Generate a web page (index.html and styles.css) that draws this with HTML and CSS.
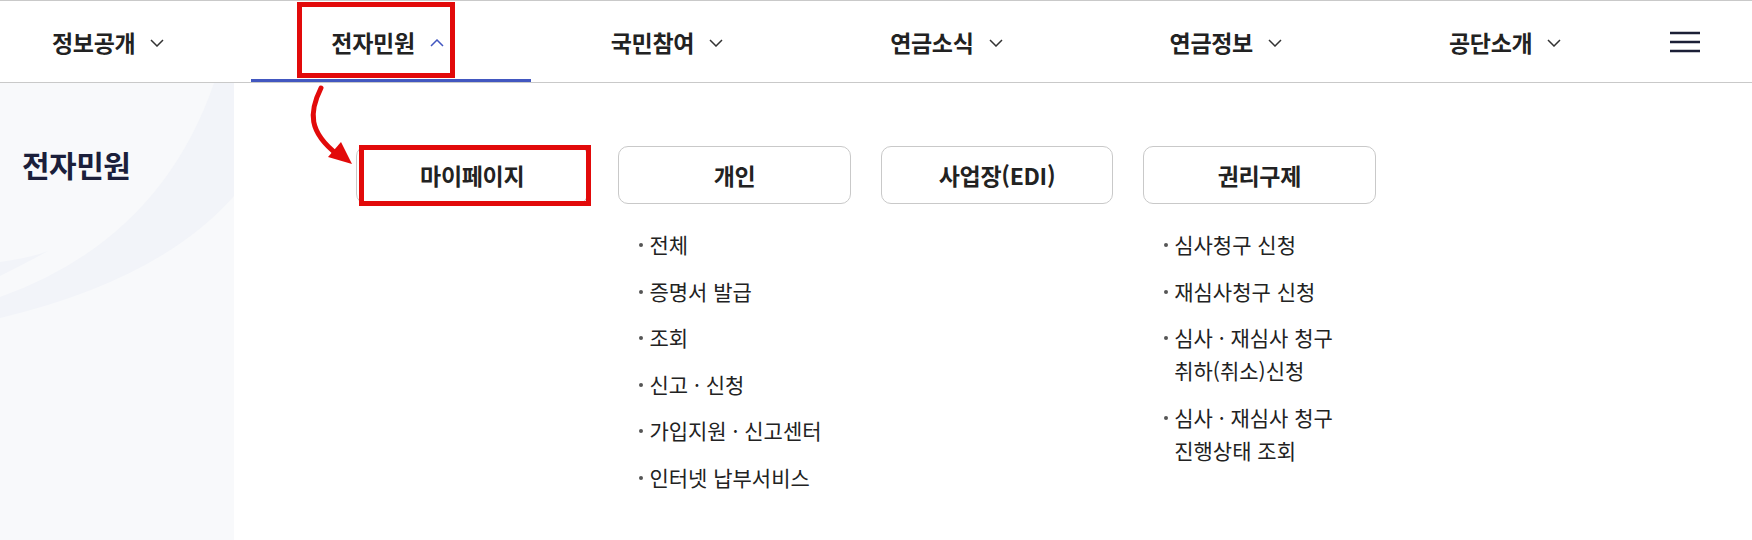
FILE: index.html
```html
<!doctype html>
<html lang="ko">
    <head>
        <meta charset="UTF-8">
        <meta name="viewport" content="width=device-width, initial-scale=1.0">
        <title>전자민원 | 메뉴</title>

        <link rel="stylesheet" href="styles.css">
    </head>
    <body>
        <header class="header">
            <nav class="gnb">
                <a class="gnb__item" href="#">
                    <span>정보공개</span>
                    <svg class="gnb__arrow" width="14" height="8" viewBox="0 0 14 8"><path d="M1 1l6 6 6-6"/></svg>
                </a>
                <a class="gnb__item gnb__item--active" href="#">
                    <span>전자민원</span>
                    <svg class="gnb__arrow" width="14" height="8" viewBox="0 0 14 8"><path d="M1 7l6-6 6 6"/></svg>
                    <span class="mark mark--gnb"></span>
                </a>
                <a class="gnb__item" href="#">
                    <span>국민참여</span>
                    <svg class="gnb__arrow" width="14" height="8" viewBox="0 0 14 8"><path d="M1 1l6 6 6-6"/></svg>
                </a>
                <a class="gnb__item" href="#">
                    <span>연금소식</span>
                    <svg class="gnb__arrow" width="14" height="8" viewBox="0 0 14 8"><path d="M1 1l6 6 6-6"/></svg>
                </a>
                <a class="gnb__item" href="#">
                    <span>연금정보</span>
                    <svg class="gnb__arrow" width="14" height="8" viewBox="0 0 14 8"><path d="M1 1l6 6 6-6"/></svg>
                </a>
                <a class="gnb__item" href="#">
                    <span>공단소개</span>
                    <svg class="gnb__arrow" width="14" height="8" viewBox="0 0 14 8"><path d="M1 1l6 6 6-6"/></svg>
                </a>
                <button class="gnb__all" type="button" aria-label="전체메뉴">
                    <svg width="30" height="22" viewBox="0 0 30 22"><path d="M0 2h30M0 11h30M0 20h30"/></svg>
                </button>
            </nav>
        </header>

        <div class="depth">
            <aside class="depth__side">
                <svg class="depth__deco" width="234" height="457" viewBox="0 83 234 457">
                    <path d="M214 83 Q160 240 0 297 L0 318 Q160 280 234 196 L234 83 Z"/>
                    <path d="M0 262 Q30 258 48 251 Q28 262 0 276 Z"/>
                </svg>
                <h2 class="depth__title">전자민원</h2>
            </aside>

            <div class="depth__main">
                <svg class="pointer" width="80" height="100" viewBox="290 80 80 100">
                    <path class="pointer__line" d="M321 88 C309 112 308 132 338 155"/>
                    <path class="pointer__head" d="M352 164 L328 157 L341 142 Z"/>
                </svg>

                <div class="group">
                    <a class="group__btn" href="#">마이페이지<span class="mark mark--btn"></span></a>
                </div>
                <div class="group">
                    <a class="group__btn" href="#">개인</a>
                    <ul class="group__list">
                        <li>전체</li>
                        <li>증명서 발급</li>
                        <li>조회</li>
                        <li>신고 · 신청</li>
                        <li>가입지원 · 신고센터</li>
                        <li>인터넷 납부서비스</li>
                    </ul>
                </div>
                <div class="group">
                    <a class="group__btn" href="#">사업장(EDI)</a>
                </div>
                <div class="group">
                    <a class="group__btn" href="#">권리구제</a>
                    <ul class="group__list">
                        <li>심사청구 신청</li>
                        <li>재심사청구 신청</li>
                        <li>심사 · 재심사 청구 취하(취소)신청</li>
                        <li>심사 · 재심사 청구 진행상태 조회</li>
                    </ul>
                </div>
            </div>
        </div>
    </body>
</html>
```

FILE: styles.css
```css
/* base */
:root {
    --line: #c9c9c9;
    --text: #222;
    --blue: #4257c0;
    --mark: #e20a0a;
    --side-bg: #f8f9fb;
}

*,
*::before,
*::after {
    box-sizing: border-box;
    padding: 0;
    margin: 0;
}

body {
    font-family: "Noto Sans CJK KR", "Noto Sans", sans-serif;
    color: var(--text);
    background-color: #fff;
    overflow: hidden;
}

a {
    color: inherit;
    text-decoration: none;
}

ul {
    list-style: none;
}

/* header | gnb */
.header {
    height: 83px;
    border-top: 1px solid var(--line);
    border-bottom: 1px solid var(--line);
}

.gnb {
    display: grid;
    grid-template-columns: repeat(6, 279.4px) 1fr;
    height: 100%;
    margin-left: -28px;
}

.gnb__item {
    position: relative;
    display: flex;
    align-items: center;
    justify-content: center;
    gap: 15px;
    padding-right: 7px;
    font-size: 23px;
    font-weight: 700;
    letter-spacing: -0.3px;
}

.gnb__arrow {
    margin-top: 2px;
    fill: none;
    stroke: #333;
    stroke-width: 1.5;
}

.gnb__item--active::after {
    position: absolute;
    right: 0;
    bottom: 0;
    left: 0;
    height: 3px;
    background-color: var(--blue);
    content: "";
}

.gnb__item--active .gnb__arrow {
    stroke: var(--blue);
}

.gnb__all {
    display: flex;
    align-items: center;
    padding-left: 22px;
    border: 0;
    background: none;
}

.gnb__all svg {
    stroke: #1b1f36;
    stroke-width: 2.6;
}

/* annotation boxes */
.mark {
    position: absolute;
    border: 5px solid var(--mark);
    pointer-events: none;
}

.mark--gnb {
    top: 1px;
    left: 46px;
    width: 158px;
    height: 76px;
}

.mark--btn {
    top: -2px;
    left: 2px;
    width: 232px;
    height: 61px;
}

/* depth menu */
.depth {
    display: flex;
    height: 457px;
}

.depth__side {
    position: relative;
    flex: 0 0 234px;
    padding: 60px 0 0 22px;
    background-color: var(--side-bg);
}

.depth__deco {
    position: absolute;
    top: 0;
    left: 0;
    fill: #f2f4f9;
}

.depth__title {
    position: relative;
    font-size: 30px;
    font-weight: 700;
    line-height: 1.4;
    color: #1b1f3b;
    letter-spacing: -0.5px;
}

.depth__main {
    position: relative;
    display: grid;
    grid-template-columns: repeat(4, 232.4px);
    column-gap: 30px;
    align-items: start;
    padding: 63px 0 0 122px;
}

.pointer {
    position: absolute;
    top: -3px;
    left: 56px;
    overflow: visible;
}

.pointer__line {
    fill: none;
    stroke: var(--mark);
    stroke-width: 5;
    stroke-linecap: round;
}

.pointer__head {
    fill: var(--mark);
}

.group__btn {
    position: relative;
    display: flex;
    align-items: center;
    justify-content: center;
    height: 58px;
    border: 1px solid var(--line);
    border-radius: 10px;
    font-size: 23px;
    font-weight: 700;
    letter-spacing: -0.3px;
}

.group__list {
    margin-top: 24px;
    padding-left: 31px;
    font-size: 21px;
    line-height: 33px;
    word-break: keep-all;
}

.group__list li {
    position: relative;
    margin-bottom: 13.5px;
}

.group__list li::before {
    position: absolute;
    top: 15px;
    left: -10px;
    width: 4px;
    height: 4px;
    border-radius: 50%;
    background-color: #555;
    content: "";
}
```
